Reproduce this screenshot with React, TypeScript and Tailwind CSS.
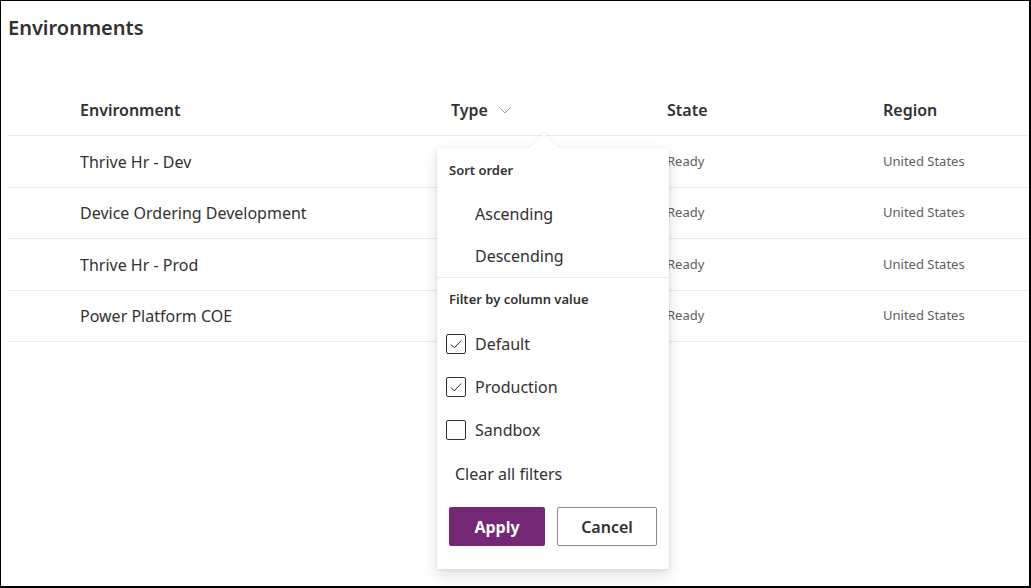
import React from "react";

const rows = [
  { name: "Thrive Hr - Dev", state: "Ready", region: "United States", h: "h-[52px]" },
  { name: "Device Ordering Development", state: "Ready", region: "United States", h: "h-[51px]" },
  { name: "Thrive Hr - Prod", state: "Ready", region: "United States", h: "h-[52px]" },
  { name: "Power Platform COE", state: "Ready", region: "United States", h: "h-[51px]" },
];

function Check({ checked }: { checked: boolean }) {
  return (
    <div className="w-[20px] h-[20px] border border-[#323130] rounded-[2px] flex items-center justify-center bg-white">
      {checked && (
        <svg width="14" height="14" viewBox="0 0 14 14" fill="none">
          <path d="M2 7.5 L5.3 10.8 L12.2 3.5" stroke="#323130" strokeWidth="1" />
        </svg>
      )}
    </div>
  );
}

export default function App() {
  return (
    <div
      className="relative w-[1031px] h-[588px] bg-white border-l border-t border-r-2 border-b-2 border-black overflow-hidden text-[#323130]"
      style={{ fontFamily: '"Noto Sans", "Open Sans", sans-serif' }}
    >
      <div className="pl-[7px] h-[56px] pt-[13px]">
        <div className="text-[20px] leading-[28px] font-semibold">Environments</div>
      </div>
      <div className="ml-[7px]">
        <div className="grid grid-cols-[72px_371px_216px_216px_1fr] h-[79px] items-end border-b border-[#edebe9]">
          <div />
          <div className="h-[50px] flex items-center text-[16px] font-semibold">Environment</div>
          <div className="h-[50px] flex items-center text-[16px] font-semibold gap-[10px]">
            Type
            <svg width="14" height="8" viewBox="0 0 14 8" fill="none">
              <path d="M1 1 L7 7 L13 1" stroke="#a19f9d" strokeWidth="1" />
            </svg>
          </div>
          <div className="h-[50px] flex items-center text-[16px] font-semibold">State</div>
          <div className="h-[50px] flex items-center text-[16px] font-semibold">Region</div>
        </div>
        {rows.map((r) => (
          <div
            key={r.name}
            className={`grid grid-cols-[72px_371px_216px_216px_1fr] ${r.h} items-center border-b border-[#edebe9]`}
          >
            <div />
            <div className="text-[16px]">{r.name}</div>
            <div />
            <div className="text-[13px] text-[#605e5c]">{r.state}</div>
            <div className="text-[13px] text-[#605e5c]">{r.region}</div>
          </div>
        ))}
      </div>

      <div
        className="absolute left-[436px] top-[147px] w-[232px] h-[421px] bg-white"
        style={{
          boxShadow: "0 6.4px 14.4px 0 rgba(0,0,0,0.13), 0 1.2px 3.6px 0 rgba(0,0,0,0.11)",
        }}
      >
        <div
          className="absolute left-[97px] top-[-10px] w-[20px] h-[20px] bg-white rotate-45"
          style={{ boxShadow: "0 0 4px 0 rgba(0,0,0,0.08)" }}
        />
        <div className="relative bg-white h-full">
          <div className="h-[46px] flex items-center pl-[12px] text-[13px] font-semibold">Sort order</div>
          <div className="h-[40px] flex items-center pl-[38px] text-[16px]">Ascending</div>
          <div className="h-[44px] flex items-center pl-[38px] text-[16px] border-b border-[#edebe9]">Descending</div>
          <div className="h-[44px] flex items-center pl-[12px] text-[13px] font-semibold">Filter by column value</div>
          {[
            ["Default", true],
            ["Production", true],
            ["Sandbox", false],
          ].map(([label, c]) => (
            <div key={label as string} className="h-[43px] flex items-center pl-[9px] gap-[9px] text-[16px]">
              <Check checked={c as boolean} />
              <span>{label as string}</span>
            </div>
          ))}
          <div className="h-[46px] flex items-center pl-[18px] text-[16px]">Clear all filters</div>
          <div className="mt-[10px] flex pl-[12px] gap-[12px]">
            <button className="w-[96px] h-[39px] bg-[#742774] text-white text-[16px] font-bold rounded-[2px]">Apply</button>
            <button className="w-[100px] h-[39px] bg-white border border-[#8a8886] text-[16px] font-semibold rounded-[2px] text-[#323130]">Cancel</button>
          </div>
        </div>
      </div>
    </div>
  );
}
